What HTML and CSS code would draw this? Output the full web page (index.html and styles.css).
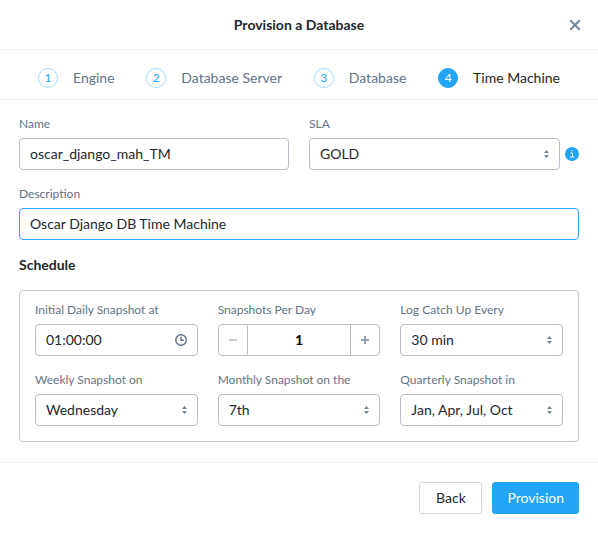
FILE: index.html
```html
<!DOCTYPE html>
<html lang="en">
<head>
<meta charset="utf-8">
<title>Provision a Database</title>
<link rel="stylesheet" href="styles.css">
</head>
<body>
<main class="modal">
  <header class="modal-header">
    <h1 class="modal-title">Provision a Database</h1>
    <button class="close" type="button" aria-label="Close">
      <svg width="12" height="12" viewBox="0 0 12 12"><path d="M1.2 1.2l9.6 9.6M10.8 1.2l-9.6 9.6"/></svg>
    </button>
  </header>
  <ol class="steps">
    <li class="step"><span class="step-number">1</span>Engine</li>
    <li class="step"><span class="step-number">2</span>Database Server</li>
    <li class="step"><span class="step-number">3</span>Database</li>
    <li class="step step-current" aria-current="step"><span class="step-number">4</span>Time Machine</li>
  </ol>
  <form class="form">
    <div class="form-body">
      <div class="row">
        <div class="field">
          <label for="name">Name</label>
          <input class="control" id="name" type="text" value="oscar_django_mah_TM">
        </div>
        <div class="field">
          <label for="sla">SLA</label>
          <div class="with-info">
            <div class="select">
              <select class="control" id="sla"><option>GOLD</option></select>
              <svg class="carets" width="5" height="8" viewBox="0 0 5 8"><path d="M0 3L2.5 0L5 3zM0 5L2.5 8L5 5z"/></svg>
            </div>
            <svg class="info" width="14" height="14" viewBox="0 0 14 14"><circle cx="7" cy="7" r="7"/><path d="M5.5 6H7.5V10M5 10H9.2"/><path d="M6.5 3.7H7.7"/></svg>
          </div>
        </div>
      </div>
      <div class="field">
        <label for="description">Description</label>
        <input class="control control-active" id="description" type="text" value="Oscar Django DB Time Machine">
      </div>
      <section class="schedule">
        <h2 class="section-title">Schedule</h2>
        <div class="schedule-box">
          <div class="field">
            <label for="daily">Initial Daily Snapshot at</label>
            <div class="select">
              <input class="control" id="daily" type="text" value="01:00:00">
              <svg class="clock" width="12" height="12" viewBox="0 0 12 12"><circle cx="6" cy="6" r="5.2"/><path d="M6 2.8V6.2H8.8"/></svg>
            </div>
          </div>
          <div class="field">
            <label for="perday">Snapshots Per Day</label>
            <div class="stepper">
              <button class="stepper-button stepper-disabled" type="button" aria-label="Decrease" disabled><svg width="8" height="8" viewBox="0 0 8 8"><path d="M0 4H8"/></svg></button>
              <input class="stepper-value" id="perday" type="text" value="1">
              <button class="stepper-button" type="button" aria-label="Increase"><svg width="8" height="8" viewBox="0 0 8 8"><path d="M0 4H8M4 0V8"/></svg></button>
            </div>
          </div>
          <div class="field">
            <label for="log">Log Catch Up Every</label>
            <div class="select">
              <select class="control" id="log"><option>30 min</option></select>
              <svg class="carets" width="5" height="8" viewBox="0 0 5 8"><path d="M0 3L2.5 0L5 3zM0 5L2.5 8L5 5z"/></svg>
            </div>
          </div>
          <div class="field">
            <label for="weekly">Weekly Snapshot on</label>
            <div class="select">
              <select class="control" id="weekly"><option>Wednesday</option></select>
              <svg class="carets" width="5" height="8" viewBox="0 0 5 8"><path d="M0 3L2.5 0L5 3zM0 5L2.5 8L5 5z"/></svg>
            </div>
          </div>
          <div class="field">
            <label for="monthly">Monthly Snapshot on the</label>
            <div class="select">
              <select class="control" id="monthly"><option>7th</option></select>
              <svg class="carets" width="5" height="8" viewBox="0 0 5 8"><path d="M0 3L2.5 0L5 3zM0 5L2.5 8L5 5z"/></svg>
            </div>
          </div>
          <div class="field">
            <label for="quarterly">Quarterly Snapshot in</label>
            <div class="select">
              <select class="control" id="quarterly"><option>Jan, Apr, Jul, Oct</option></select>
              <svg class="carets" width="5" height="8" viewBox="0 0 5 8"><path d="M0 3L2.5 0L5 3zM0 5L2.5 8L5 5z"/></svg>
            </div>
          </div>
        </div>
      </section>
    </div>
    <footer class="modal-footer">
      <button class="button" type="button">Back</button>
      <button class="button button-primary" type="submit">Provision</button>
    </footer>
  </form>
</main>
</body>
</html>
```
FILE: styles.css
```css
* {
  box-sizing: border-box;
}

body {
  margin: 0;
  background: #fff;
  color: #22272e;
  font: 14px/20px Lato, sans-serif;
}

input,
select,
button {
  font: inherit;
  color: inherit;
}

.modal-header {
  display: grid;
  grid-template-columns: 1fr auto 1fr;
  align-items: center;
  height: 50px;
  padding: 0 17px;
  border-bottom: 1px solid #eff1f4;
}

.modal-title {
  grid-column: 2;
  margin: 0;
  font-size: 14px;
  font-weight: 700;
}

.close {
  justify-self: end;
  display: flex;
  padding: 0;
  border: 0;
  background: none;
}

.close svg {
  fill: none;
  stroke: #75869a;
  stroke-width: 2;
}

.steps {
  display: flex;
  justify-content: space-between;
  align-items: center;
  height: 50px;
  margin: 0;
  padding: 6px 38px 0;
  border-bottom: 1px solid #eff1f4;
  list-style: none;
}

.step {
  display: flex;
  align-items: center;
  gap: 15px;
  color: #627386;
}

.step-number {
  width: 20px;
  height: 20px;
  border: 1px solid #a6dafd;
  border-radius: 50%;
  color: #22a5f7;
  font-size: 12px;
  line-height: 18px;
  text-align: center;
}

.step-current {
  color: #22272e;
}

.step-current .step-number {
  border-color: #22a5f7;
  background: #22a5f7;
  color: #fff;
}

.form-body {
  display: grid;
  gap: 16px;
  padding: 16px 19px 20px;
}

.row {
  display: grid;
  grid-template-columns: 1fr 1fr;
  gap: 20px;
}

.field {
  display: grid;
  gap: 6px;
  min-width: 0;
}

.field label {
  color: #627386;
  font-size: 12px;
  line-height: 16px;
}

.control {
  width: 100%;
  height: 32px;
  margin: 0;
  padding: 0 10px;
  border: 1px solid #b8bfca;
  border-radius: 4px;
  outline: 0;
  background: #fff;
  appearance: none;
}

input.control {
  padding-bottom: 2px;
}

.control-active {
  border-color: #22a5f7;
}

.with-info {
  display: flex;
  align-items: center;
  gap: 5px;
}

.select {
  display: grid;
  flex: 1;
  align-items: center;
}

.select > * {
  grid-area: 1 / 1;
}

.carets,
.clock {
  justify-self: end;
  margin-right: 11px;
  pointer-events: none;
}

.carets {
  fill: #75869a;
}

.clock {
  fill: none;
  stroke: #627386;
  stroke-width: 1.5;
}

.info {
  fill: #22a5f7;
}

.info path {
  fill: none;
  stroke: #fff;
  stroke-width: 1;
}

.section-title {
  margin: 0 0 16px;
  font-size: 14px;
  font-weight: 700;
  line-height: 18px;
}

.schedule-box {
  display: grid;
  grid-template-columns: repeat(3, 1fr);
  gap: 16px 20px;
  padding: 11px 15px 15px;
  border: 1px solid #c3c8d0;
  border-radius: 4px;
}

.stepper {
  display: grid;
  grid-template-columns: 28px minmax(0, 1fr) 28px;
  height: 32px;
  border: 1px solid #b8bfca;
  border-radius: 4px;
}

.stepper-button {
  display: flex;
  align-items: center;
  justify-content: center;
  padding: 0;
  border: 0;
  background: none;
}

.stepper-button svg {
  fill: none;
  stroke: #94a1b2;
  stroke-width: 2;
}

.stepper-disabled svg {
  stroke: #c3cad5;
}

.stepper-value {
  width: 100%;
  padding: 0;
  border: 0;
  border-right: 1px solid #b8bfca;
  border-left: 1px solid #b8bfca;
  outline: 0;
  background: none;
  color: #000;
  font-weight: 700;
  text-align: center;
}

.modal-footer {
  display: flex;
  justify-content: flex-end;
  gap: 10px;
  padding: 19px;
  border-top: 1px solid #eff1f4;
}

.button {
  min-width: 63px;
  height: 32px;
  padding: 0 14px;
  border: 1px solid #d3d8e0;
  border-radius: 3px;
  background: #fff;
}

.button-primary {
  border-color: #22a5f7;
  background: #22a5f7;
  color: #fff;
}
```
